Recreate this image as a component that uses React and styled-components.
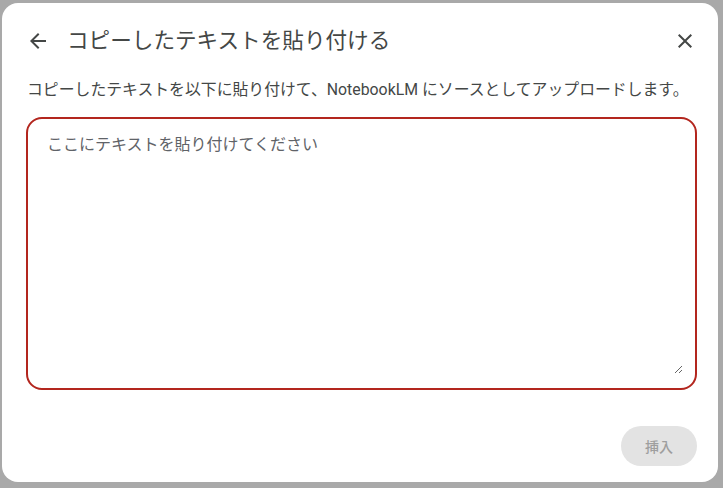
import React from "react";
import styled, { createGlobalStyle } from "styled-components";
import { MdArrowBack, MdClose } from "react-icons/md";

const GlobalStyle = createGlobalStyle`
  html, body {
    margin: 0;
    padding: 0;
    background: #a9a9a9;
  }
  body {
    font-family: Roboto, "Noto Sans CJK JP", sans-serif;
  }
`;

const Backdrop = styled.div`
  width: 723px;
  height: 488px;
  box-sizing: border-box;
  padding: 3px 5px 6px 2px;
  background: #a9a9a9;
`;

const Dialog = styled.section`
  box-sizing: border-box;
  height: 100%;
  background: #fff;
  border-radius: 16px;
  padding: 14px 21px 16px 24px;
  display: flex;
  flex-direction: column;
`;

const Header = styled.header`
  height: 48px;
  display: flex;
  align-items: center;
`;

const IconButton = styled.button`
  width: 24px;
  height: 24px;
  padding: 0;
  border: none;
  background: none;
  color: #444746;
  display: flex;
  align-items: center;
  justify-content: center;
  cursor: pointer;
  margin-left: ${(p) => (p.$end ? "auto" : "0")};
  svg {
    width: 24px;
    height: 24px;
  }
`;

const Title = styled.h2`
  margin: 0 0 0 17px;
  font-size: 21.6px;
  font-weight: 400;
  color: #444746;
  line-height: 28px;
`;

const Description = styled.p`
  margin: 13px 0 0 1px;
  font-size: 15.85px;
  line-height: 24px;
  color: #444746;
  white-space: nowrap;
`;

const Field = styled.div`
  margin-top: 15px;
  height: 273px;
  box-sizing: border-box;
  border: 2px solid #b3261e;
  border-radius: 16px;
  padding: 14px 12px 14px 19px;
  display: flex;
`;

const TextArea = styled.textarea`
  flex: 1;
  border: none;
  padding: 0;
  margin: 0;
  font-family: Roboto, "Noto Sans CJK JP", sans-serif;
  font-size: 16px;
  line-height: 24px;
  color: #1f1f1f;
  outline: none;
  background: transparent;
  &::placeholder {
    color: #5f6368;
  }
`;

const Footer = styled.footer`
  margin-top: auto;
  display: flex;
  justify-content: flex-end;
`;

const InsertButton = styled.button`
  width: 76px;
  height: 40px;
  border: none;
  border-radius: 20px;
  background: #e3e3e3;
  color: #9e9e9e;
  font-family: Roboto, "Noto Sans CJK JP", sans-serif;
  font-size: 14px;
  font-weight: 500;
`;

export default function App() {
  return (
    <>
      <GlobalStyle />
      <Backdrop>
        <Dialog>
          <Header>
            <IconButton aria-label="戻る">
              <MdArrowBack />
            </IconButton>
            <Title>コピーしたテキストを貼り付ける</Title>
            <IconButton $end aria-label="閉じる">
              <MdClose />
            </IconButton>
          </Header>
          <Description>
            コピーしたテキストを以下に貼り付けて、NotebookLM にソースとしてアップロードします。
          </Description>
          <Field>
            <TextArea placeholder="ここにテキストを貼り付けてください" />
          </Field>
          <Footer>
            <InsertButton disabled>挿入</InsertButton>
          </Footer>
        </Dialog>
      </Backdrop>
    </>
  );
}
